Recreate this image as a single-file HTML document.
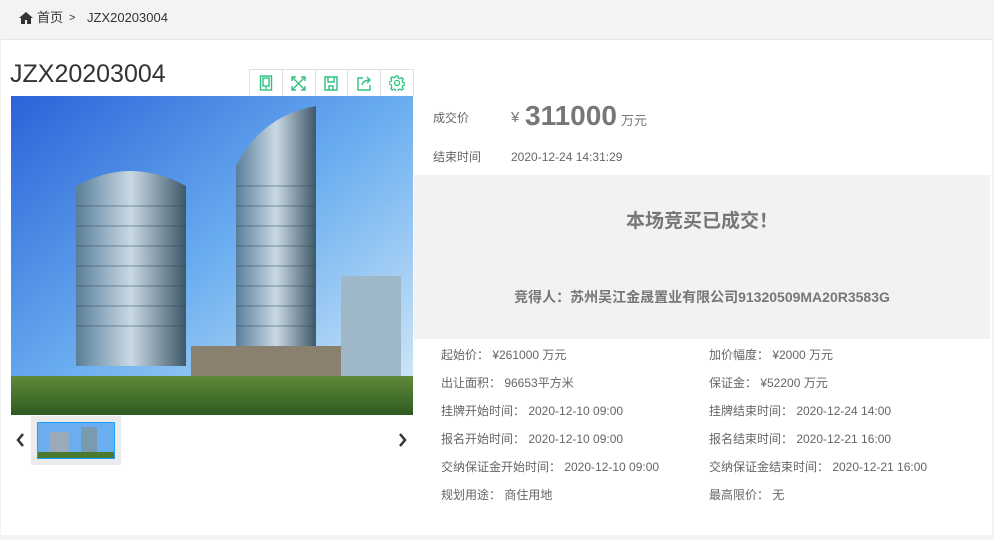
<!DOCTYPE html>
<html><head><meta charset="utf-8"><style>
*{margin:0;padding:0;box-sizing:border-box}
body{width:994px;height:540px;background:#f3f3f3;font-family:"Liberation Sans","Noto Sans CJK SC",sans-serif;position:relative;overflow:hidden;color:#333}
.top{position:absolute;left:0;top:0;width:994px;height:38px;background:#f3f3f3;font-size:13px;color:#333}
.top span{position:absolute;top:10px;line-height:16px}
.panel{position:absolute;left:1px;top:39px;width:991px;height:496px;background:#fff;border-top:1px solid #e6e6e6}
.ab{position:absolute;white-space:nowrap}
.g{color:#666;font-size:12px;line-height:14px}
.tools{position:absolute;left:249px;top:69px;width:165px;height:28px;border:1px solid #e0e0e0;background:#fff;display:flex}
.tools div{flex:1;border-right:1px solid #e0e0e0;display:flex;align-items:center;justify-content:center}
.tools div:last-child{border-right:none}
</style></head><body>
<div class="top">
<svg style="position:absolute;left:19px;top:12px" width="14" height="12" viewBox="0 0 14 12"><path d="M7 0L0 6h2v6h4V8h2v4h4V6h2z" fill="#333"/></svg>
<span style="left:37px">首页</span><span style="left:69px;font-size:11px">&gt;</span><span style="left:87px">JZX20203004</span>
</div>
<div class="panel"></div>
<div class="ab" style="left:10px;top:59px;font-size:25px;line-height:30px;color:#333">JZX20203004</div>
<div class="tools">
<div><svg width="14" height="16" viewBox="0 0 14 16" fill="none" stroke="#2ec27e" stroke-width="1.4"><rect x="1.5" y="1" width="11" height="14"/><rect x="4" y="3" width="6" height="8"/><path d="M6 13h2"/></svg></div>
<div><svg width="15" height="15" viewBox="0 0 15 15" fill="none" stroke="#2ec27e" stroke-width="1.4"><path d="M1 1l13 13M14 1L1 14M1 5V1h4M10 1h4v4M14 10v4h-4M5 14H1v-4"/></svg></div>
<div><svg width="14" height="15" viewBox="0 0 14 15" fill="none" stroke="#2ec27e" stroke-width="1.4"><path d="M1 1h12v13H1zM4 1v5h6V1M5 10h4v4H5z"/></svg></div>
<div><svg width="15" height="15" viewBox="0 0 15 15" fill="none" stroke="#2ec27e" stroke-width="1.4"><path d="M6 2H1v12h12V9M5 9c1-4 4-5 8-5M10 1l3 3-3 3"/></svg></div>
<div><svg width="16" height="16" viewBox="0 0 16 16" fill="none" stroke="#2ec27e" stroke-width="1.3"><circle cx="8" cy="8" r="2.5"/><path d="M7 1h2l.5 2 1.5.7 1.8-1 1.4 1.4-1 1.8.7 1.5 2 .5v2l-2 .5-.7 1.5 1 1.8-1.4 1.4-1.8-1-1.5.7-.5 2H7l-.5-2-1.5-.7-1.8 1-1.4-1.4 1-1.8L2.1 9.5 0 9V7l2-.5.7-1.5-1-1.8 1.4-1.4 1.8 1 1.5-.7z"/></svg></div>
</div>
<svg class="ab" style="left:11px;top:96px" width="402" height="319" viewBox="0 0 402 319">
<defs><linearGradient id="sky" x1="0" y1="0" x2="1" y2="1"><stop offset="0" stop-color="#2a63d8"/><stop offset=".5" stop-color="#6aaef0"/><stop offset="1" stop-color="#d8ecf8"/></linearGradient>
<linearGradient id="t1" x1="0" x2="1"><stop offset="0" stop-color="#5a7f9a"/><stop offset=".5" stop-color="#c9d9e4"/><stop offset="1" stop-color="#3e5868"/></linearGradient>
<linearGradient id="gr" x1="0" y1="0" x2="0" y2="1"><stop offset="0" stop-color="#5f8a3a"/><stop offset="1" stop-color="#2f5a20"/></linearGradient></defs>
<rect width="402" height="319" fill="url(#sky)"/>
<rect x="330" y="180" width="60" height="100" fill="#9fb8c8"/>
<path d="M65 90Q120 60 175 90V270H65z" fill="url(#t1)"/>
<path d="M225 70Q250 20 305 10V270H225z" fill="url(#t1)"/>
<g stroke="#2d4355" stroke-width="1" opacity=".5"><path d="M65 110H175M65 130H175M65 150H175M65 170H175M65 190H175M65 210H175M65 230H175M225 90H305M225 110H305M225 130H305M225 150H305M225 170H305M225 190H305M225 210H305M225 230H305"/></g>
<rect x="180" y="250" width="150" height="40" fill="#8a8070"/>
<rect x="0" y="280" width="402" height="39" fill="url(#gr)"/>
</svg>
<svg class="ab" style="left:16px;top:433px" width="9" height="14"><path d="M7 1L2 7l5 6" fill="none" stroke="#333" stroke-width="2.5"/></svg>
<svg class="ab" style="left:398px;top:433px" width="9" height="14"><path d="M2 1l5 6-5 6" fill="none" stroke="#333" stroke-width="2.5"/></svg>
<div class="ab" style="left:31px;top:416px;width:90px;height:49px;background:#ebebeb"></div>
<svg class="ab" style="left:37px;top:422px" width="78" height="37"><rect x="0.5" y="0.5" width="77" height="36" fill="#6aaef0" stroke="#1aa0ff"/><rect x="12" y="10" width="20" height="22" fill="#9ab"/><rect x="44" y="5" width="16" height="27" fill="#7a9ab0"/><rect x="1" y="30" width="76" height="6" fill="#4a7a30"/></svg>
<div class="ab g" style="left:433px;top:111px">成交价</div>
<div class="ab" style="left:511px;top:110px;font-size:15px;line-height:16px;color:#777">¥</div>
<div class="ab" style="left:525px;top:99px;font-size:28px;line-height:34px;font-weight:bold;color:#777">311000</div>
<div class="ab" style="left:621px;top:114px;font-size:13px;line-height:14px;color:#777">万元</div>
<div class="ab g" style="left:433px;top:150px">结束时间</div>
<div class="ab g" style="left:511px;top:150px">2020-12-24 14:31:29</div>
<div class="ab" style="left:414px;top:175px;width:576px;height:164px;background:#f2f2f2"></div>
<div class="ab" style="left:414px;top:210px;width:576px;text-align:center;font-size:19px;line-height:24px;font-weight:bold;color:#777">本场竞买已成交！</div>
<div class="ab" style="left:414px;top:289px;width:576px;text-align:center;font-size:14px;line-height:16px;font-weight:bold;color:#777">竞得人：苏州吴江金晟置业有限公司91320509MA20R3583G</div>
<div class="ab g" style="left:441px;top:348px">起始价： ¥261000 万元</div>
<div class="ab g" style="left:709px;top:348px">加价幅度： ¥2000 万元</div>
<div class="ab g" style="left:441px;top:376px">出让面积： 96653平方米</div>
<div class="ab g" style="left:709px;top:376px">保证金： ¥52200 万元</div>
<div class="ab g" style="left:441px;top:404px">挂牌开始时间： 2020-12-10 09:00</div>
<div class="ab g" style="left:709px;top:404px">挂牌结束时间： 2020-12-24 14:00</div>
<div class="ab g" style="left:441px;top:432px">报名开始时间： 2020-12-10 09:00</div>
<div class="ab g" style="left:709px;top:432px">报名结束时间： 2020-12-21 16:00</div>
<div class="ab g" style="left:441px;top:460px">交纳保证金开始时间： 2020-12-10 09:00</div>
<div class="ab g" style="left:709px;top:460px">交纳保证金结束时间： 2020-12-21 16:00</div>
<div class="ab g" style="left:441px;top:488px">规划用途： 商住用地</div>
<div class="ab g" style="left:709px;top:488px">最高限价： 无</div>
</body></html>
